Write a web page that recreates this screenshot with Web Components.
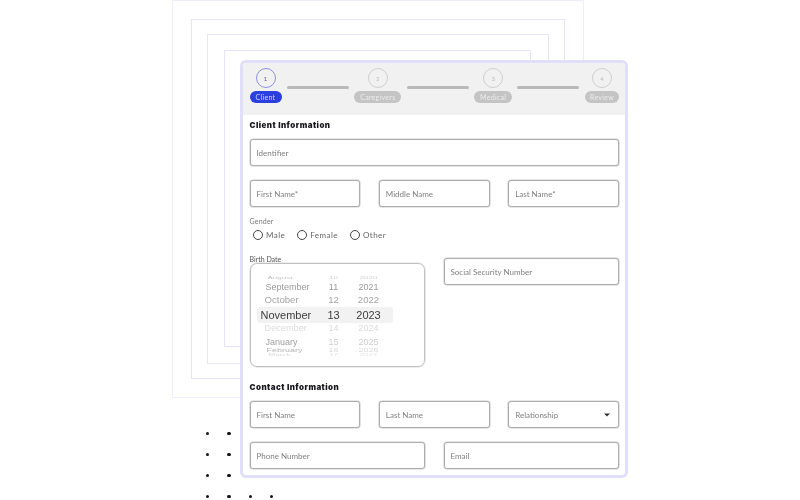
<!DOCTYPE html>
<html>
<head>
<meta charset="utf-8">
<style>
  html, body { margin: 0; padding: 0; background: #fff; }
  body { width: 800px; height: 500px; overflow: hidden; position: relative; font-family: "Lato", "Liberation Sans", sans-serif; }
</style>
</head>
<body>
<square-backdrop></square-backdrop>
<dot-grid></dot-grid>
<intake-form>
  <step-bar slot="steps">
    <form-step num="1" label="Client" w="32" active></form-step>
    <form-step num="2" label="Caregivers" w="47"></form-step>
    <form-step num="3" label="Medical" w="38"></form-step>
    <form-step num="4" label="Review" w="34"></form-step>
  </step-bar>
  <section-title top="4">Client Information</section-title>
  <form-row cols="1fr" gap="0" top="8"><text-field>Identifier</text-field></form-row>
  <form-row cols="1fr 1fr 1fr" gap="18.5" top="14">
    <text-field>First Name*</text-field>
    <text-field>Middle Name</text-field>
    <text-field>Last Name*</text-field>
  </form-row>
  <gender-choice></gender-choice>
  <birth-row></birth-row>
  <section-title top="14">Contact Information</section-title>
  <form-row cols="1fr 1fr 1fr" gap="18.5" top="8">
    <text-field>First Name</text-field>
    <text-field>Last Name</text-field>
    <text-field select>Relationship</text-field>
  </form-row>
  <form-row cols="1fr 1fr" gap="18.5" top="14">
    <text-field>Phone Number</text-field>
    <text-field>Email</text-field>
  </form-row>
</intake-form>

<script>
class SquareBackdrop extends HTMLElement {
    constructor() {
        super();
        this.attachShadow({ mode: 'open' });
        this.shadowRoot.innerHTML = `
            <style>
                :host { position: absolute; left: 172px; top: 0; width: 412px; height: 398px; box-sizing: border-box; border: 1px solid #eeedfa; padding: 18px; display: block; filter: blur(.25px); }
                div { box-sizing: border-box; border: 1px solid #e5e4f8; width: 100%; height: 100%; padding: 14px 15px; }
                div div { border-color: #e7e6f9; padding: 15px 17px 16px 16px; }
                div div div { border-color: #e5e4f8; padding: 0; }
            </style>
            <div><div><div></div></div></div>
        `;
    }
}
customElements.define("square-backdrop", SquareBackdrop);

class DotGrid extends HTMLElement {
    constructor() {
        super();
        this.attachShadow({ mode: 'open' });
        const rows = [2, 2, 2, 4];
        let dots = "";
        rows.forEach(n => {
            for (let i = 0; i < 4; i++) dots += i < n ? "<i></i>" : "<b></b>";
        });
        this.shadowRoot.innerHTML = `
            <style>
                :host { position: absolute; left: 206.2px; top: 432.2px; display: grid; grid-template-columns: repeat(4, 3.2px); grid-auto-rows: 3.2px; column-gap: 18.1px; row-gap: 17.8px; }
                i { background: #14141c; border-radius: 50%; }
            </style>
            ${dots}
        `;
    }
}
customElements.define("dot-grid", DotGrid);

class IntakeForm extends HTMLElement {
    constructor() {
        super();
        this.attachShadow({ mode: 'open' });
        this.shadowRoot.innerHTML = `
            <style>
                :host { position: absolute; left: 240px; top: 60px; width: 388px; height: 418px; box-sizing: border-box; display: block; background: #fff; border: 3px solid #e0def9; border-radius: 6px; overflow: hidden; filter: blur(.3px); }
                .body { padding: 0 6px 0 6.5px; }
            </style>
            <slot name="steps"></slot>
            <div class="body"><slot></slot></div>
        `;
    }
}
customElements.define("intake-form", IntakeForm);

class StepBar extends HTMLElement {
    constructor() {
        super();
        this.attachShadow({ mode: 'open' });
        this.shadowRoot.innerHTML = `
            <style>
                :host { display: flex; justify-content: space-between; background: #f1f1f1; height: 52px; box-sizing: border-box; padding: 5px 6px 0 6.5px; position: relative; }
                .line { position: absolute; top: 23px; height: 2.5px; width: 62px; background: #b9b9b9; border-radius: 2px; }
            </style>
            <slot></slot>
            <span class="line" style="left:44px"></span>
            <span class="line" style="left:164px"></span>
            <span class="line" style="left:274px"></span>
        `;
    }
}
customElements.define("step-bar", StepBar);

class FormStep extends HTMLElement {
    constructor() {
        super();
        this.attachShadow({ mode: 'open' });
    }
    connectedCallback() {
        const active = this.hasAttribute("active");
        this.shadowRoot.innerHTML = `
            <style>
                :host { display: flex; flex-direction: column; align-items: center; gap: 3px; }
                .num { width: 20px; height: 20px; border-radius: 50%; box-sizing: border-box; border: 1px solid ${active ? "#8f8fdc" : "#cfcfcf"}; display: flex; align-items: center; justify-content: center; font-size: 6px; color: ${active ? "#5a5a8c" : "#bbb"}; }
                .label { width: ${this.getAttribute("w")}px; height: 12px; line-height: 12px; text-align: center; border-radius: 6px; background: ${active ? "#2a3fe0" : "#c4c4c4"}; color: ${active ? "#cfd5ff" : "#ececec"}; font-size: 7px; letter-spacing: .3px; }
            </style>
            <span class="num">${this.getAttribute("num")}</span>
            <span class="label">${this.getAttribute("label")}</span>
        `;
    }
}
customElements.define("form-step", FormStep);

class SectionTitle extends HTMLElement {
    constructor() {
        super();
        this.attachShadow({ mode: 'open' });
    }
    connectedCallback() {
        this.shadowRoot.innerHTML = `
            <style>
                :host { display: block; margin-top: ${this.getAttribute("top")}px; font-size: 8px; line-height: 12px; font-weight: 900; letter-spacing: .45px; color: #16161c; font-family: "Inter", sans-serif; }
            </style>
            <slot></slot>
        `;
    }
}
customElements.define("section-title", SectionTitle);

class FormRow extends HTMLElement {
    constructor() {
        super();
        this.attachShadow({ mode: 'open' });
    }
    connectedCallback() {
        this.shadowRoot.innerHTML = `
            <style>
                :host { display: grid; grid-template-columns: ${this.getAttribute("cols")}; column-gap: ${this.getAttribute("gap")}px; margin-top: ${this.getAttribute("top")}px; }
            </style>
            <slot></slot>
        `;
    }
}
customElements.define("form-row", FormRow);

class TextField extends HTMLElement {
    constructor() {
        super();
        this.attachShadow({ mode: 'open' });
    }
    connectedCallback() {
        const arrow = this.hasAttribute("select") ? `<svg width="6" height="4" viewBox="0 0 6 4"><path d="M0 0.5h6L3 3.5z" fill="#333"/></svg>` : "";
        this.shadowRoot.innerHTML = `
            <style>
                :host { display: flex; align-items: center; justify-content: space-between; box-sizing: border-box; height: 27px; border: 1px solid #adadad; box-shadow: 0 0 0 .6px #d0d0d0; border-radius: 3px; padding: 0 8px 0 6px; font-size: 8px; color: #808080; background: #fff; }
            </style>
            <span><slot></slot></span>${arrow}
        `;
    }
}
customElements.define("text-field", TextField);

class GenderChoice extends HTMLElement {
    constructor() {
        super();
        this.attachShadow({ mode: 'open' });
        this.shadowRoot.innerHTML = `
            <style>
                :host { display: block; margin-top: 10px; font-size: 7px; color: #777; letter-spacing: .2px; }
                .label { line-height: 9px; }
                .opts { display: flex; margin-top: 4px; padding-left: 3.5px; font-size: 8px; align-items: center; color: #666; letter-spacing: .45px; }
                .opt { display: flex; align-items: center; gap: 3px; line-height: 10px; margin-right: 12px; }
                .radio { width: 10px; height: 10px; box-sizing: border-box; border: 1.5px solid #444; border-radius: 50%; }
            </style>
            <div class="label">Gender</div>
            <div class="opts">
                <span class="opt"><span class="radio"></span>Male</span>
                <span class="opt"><span class="radio"></span>Female</span>
                <span class="opt"><span class="radio"></span>Other</span>
            </div>
        `;
    }
}
customElements.define("gender-choice", GenderChoice);

class BirthRow extends HTMLElement {
    constructor() {
        super();
        this.attachShadow({ mode: 'open' });
        this.shadowRoot.innerHTML = `
            <style>
                :host { display: grid; grid-template-columns: 175.5px 1fr; column-gap: 18.5px; margin-top: 15px; }
                .label { font-size: 7px; line-height: 8px; color: #555; }
                .wheel { position: relative; height: 104px; box-sizing: border-box; border: 1px solid #c0c0c0; box-shadow: 0 0 0 .6px #dcdcdc; border-radius: 7px; font-family: "Liberation Sans", sans-serif; }
                .band { position: absolute; left: 6px; top: 43px; width: 136px; height: 15.5px; background: #f2f2f2; border-radius: 3px; }
            </style>
            <div>
                <div class="label">Birth Date</div>
                <div class="wheel"><div class="band"></div><wheel-rows></wheel-rows></div>
            </div>
            <text-field style="margin-top:3px">Social Security Number</text-field>
        `;
    }
}
customElements.define("birth-row", BirthRow);

class WheelRows extends HTMLElement {
    constructor() {
        super();
        this.attachShadow({ mode: 'open' });
        // month, day, year, centre y, font size, squash, month colour, number colour, left of month
        const rows = [
            ["August", "10", "2020", 14, 8, .55, "#c4c4c4", "#cfcfcf", 17],
            ["September", "11", "2021", 23, 9, 1, "#9a9a9a", "#9a9a9a", 15],
            ["October", "12", "2022", 36, 9.6, 1, "#a3a3a3", "#a3a3a3", 14],
            ["November", "13", "2023", 51, 11, 1, "#3c3c3c", "#3c3c3c", 10],
            ["December", "14", "2024", 65, 9.2, 1, "#dcdcdc", "#dcdcdc", 14],
            ["January", "15", "2025", 78, 9, 1, "#9f9f9f", "#cfcfcf", 15],
            ["February", "16", "2026", 87, 9, .55, "#b4b4b4", "#d8d8d8", 16],
            ["March", "17", "2027", 91, 8, .35, "#dadada", "#e4e4e4", 18]
        ];
        const html = rows.map(r => `
            <span style="top:${r[3]}px;left:${r[8]}px;font-size:${r[4]}px;color:${r[6]};transform:translateY(-50%) scaleY(${r[5]})">${r[0]}</span>
            <span style="top:${r[3]}px;left:83px;font-size:${r[4]}px;color:${r[7]};transform:translate(-50%,-50%) scaleY(${r[5]})">${r[1]}</span>
            <span style="top:${r[3]}px;left:118px;font-size:${r[4]}px;color:${r[7]};transform:translate(-50%,-50%) scaleY(${r[5]})">${r[2]}</span>
        `).join("");
        this.shadowRoot.innerHTML = `
            <style>
                :host { position: absolute; left: 0; right: 0; top: 12px; bottom: 9px; overflow: hidden; }
                .inner { position: absolute; left: 0; top: -12px; width: 100%; height: 102px; }
                span { position: absolute; line-height: 1; white-space: nowrap; }
            </style>
            <div class="inner">${html}</div>
        `;
    }
}
customElements.define("wheel-rows", WheelRows);
</script>
</body>
</html>
